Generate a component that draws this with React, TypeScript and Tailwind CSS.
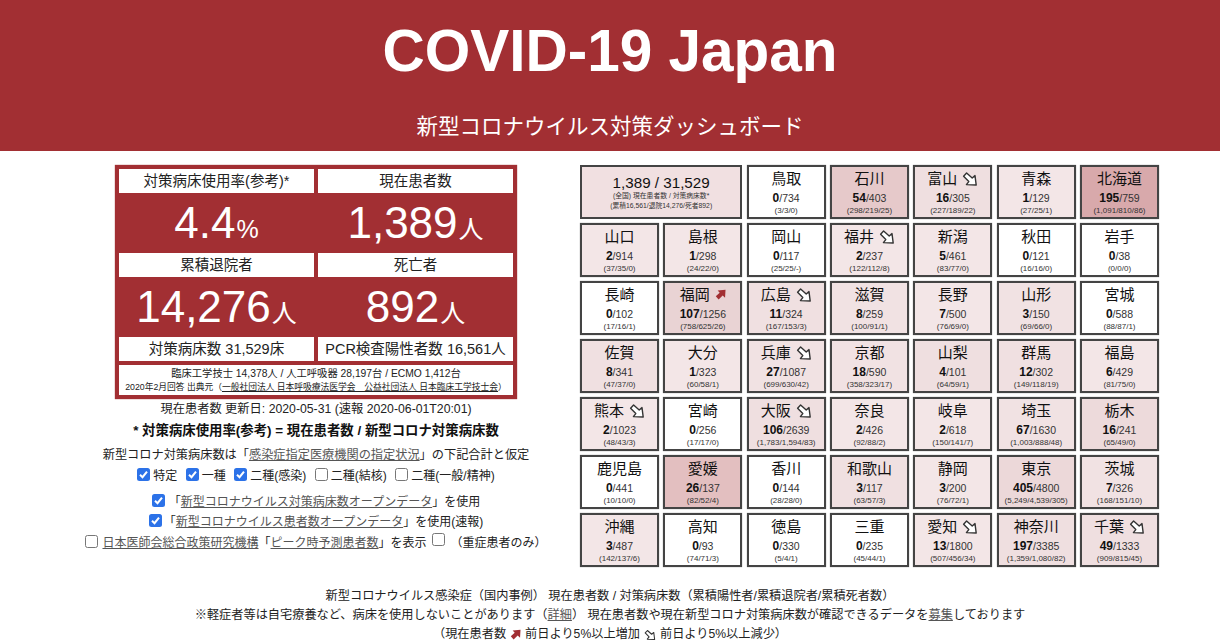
import { ReactNode } from "react"

const sans = "font-['Liberation_Sans','Noto_Sans_CJK_JP',sans-serif]"

type Pref = { name: string; now: number; beds: string; sub: string; bg: string; icon?: "up" | "down" }

// outlined arrow, down and to the right
const DownIcon = ({ size = 16 }: { size?: number }) => (
  <svg width={size} height={size} viewBox="0 0 16 16" className="inline-block" fill="#fff" stroke="#333" strokeWidth="1.4" strokeLinejoin="round">
    <path d="M4.6 2 L10.2 7 L13 4.6 L14.2 14 L4.4 13.6 L6.8 10.6 L1.6 5.2 Z" />
  </svg>
)

// filled arrow, up and to the right
const UpIcon = ({ size = 11 }: { size?: number }) => (
  <svg width={size} height={size} viewBox="0 0 14 14" className="inline-block">
    <path d="M1 9.2 L6 4.8 L3.4 2 L13.4 1 L12.8 11 L9.8 8.4 L4.6 13.4 Z" fill="#a22f33" />
  </svg>
)

const rows: Pref[][] = [
  [
    { name: "鳥取", now: 0, beds: "734", sub: "(3/3/0)", bg: "bg-white" },
    { name: "石川", now: 54, beds: "403", sub: "(298/219/25)", bg: "bg-[#e6c9ca]" },
    { name: "富山", now: 16, beds: "305", sub: "(227/189/22)", bg: "bg-[#efdfe0]", icon: "down" },
    { name: "青森", now: 1, beds: "129", sub: "(27/25/1)", bg: "bg-[#f3e6e7]" },
    { name: "北海道", now: 195, beds: "759", sub: "(1,091/810/86)", bg: "bg-[#d8a9ab]" },
  ],
  [
    { name: "山口", now: 2, beds: "914", sub: "(37/35/0)", bg: "bg-[#f3e6e7]" },
    { name: "島根", now: 1, beds: "298", sub: "(24/22/0)", bg: "bg-[#f3e6e7]" },
    { name: "岡山", now: 0, beds: "117", sub: "(25/25/-)", bg: "bg-white" },
    { name: "福井", now: 2, beds: "237", sub: "(122/112/8)", bg: "bg-[#f3e6e7]", icon: "down" },
    { name: "新潟", now: 5, beds: "461", sub: "(83/77/0)", bg: "bg-[#f3e6e7]" },
    { name: "秋田", now: 0, beds: "121", sub: "(16/16/0)", bg: "bg-white" },
    { name: "岩手", now: 0, beds: "38", sub: "(0/0/0)", bg: "bg-white" },
  ],
  [
    { name: "長崎", now: 0, beds: "102", sub: "(17/16/1)", bg: "bg-white" },
    { name: "福岡", now: 107, beds: "1256", sub: "(758/625/26)", bg: "bg-[#e9d3d4]", icon: "up" },
    { name: "広島", now: 11, beds: "324", sub: "(167/153/3)", bg: "bg-[#f0e0e1]", icon: "down" },
    { name: "滋賀", now: 8, beds: "259", sub: "(100/91/1)", bg: "bg-[#f1e2e3]" },
    { name: "長野", now: 7, beds: "500", sub: "(76/69/0)", bg: "bg-[#f3e6e7]" },
    { name: "山形", now: 3, beds: "150", sub: "(69/66/0)", bg: "bg-[#f1e2e3]" },
    { name: "宮城", now: 0, beds: "588", sub: "(88/87/1)", bg: "bg-white" },
  ],
  [
    { name: "佐賀", now: 8, beds: "341", sub: "(47/37/0)", bg: "bg-[#f0e0e1]" },
    { name: "大分", now: 1, beds: "323", sub: "(60/58/1)", bg: "bg-[#f3e6e7]" },
    { name: "兵庫", now: 27, beds: "1087", sub: "(699/630/42)", bg: "bg-[#f1e2e3]", icon: "down" },
    { name: "京都", now: 18, beds: "590", sub: "(358/323/17)", bg: "bg-[#f1e2e3]" },
    { name: "山梨", now: 4, beds: "101", sub: "(64/59/1)", bg: "bg-[#efdfe0]" },
    { name: "群馬", now: 12, beds: "302", sub: "(149/118/19)", bg: "bg-[#f0e0e1]" },
    { name: "福島", now: 6, beds: "429", sub: "(81/75/0)", bg: "bg-[#f3e6e7]" },
  ],
  [
    { name: "熊本", now: 2, beds: "1023", sub: "(48/43/3)", bg: "bg-[#f3e6e7]", icon: "down" },
    { name: "宮崎", now: 0, beds: "256", sub: "(17/17/0)", bg: "bg-white" },
    { name: "大阪", now: 106, beds: "2639", sub: "(1,783/1,594/83)", bg: "bg-[#efdfe0]", icon: "down" },
    { name: "奈良", now: 2, beds: "426", sub: "(92/88/2)", bg: "bg-[#f3e6e7]" },
    { name: "岐阜", now: 2, beds: "618", sub: "(150/141/7)", bg: "bg-[#f3e6e7]" },
    { name: "埼玉", now: 67, beds: "1630", sub: "(1,003/888/48)", bg: "bg-[#f1e2e3]" },
    { name: "栃木", now: 16, beds: "241", sub: "(65/49/0)", bg: "bg-[#eddadb]" },
  ],
  [
    { name: "鹿児島", now: 0, beds: "441", sub: "(10/10/0)", bg: "bg-white" },
    { name: "愛媛", now: 26, beds: "137", sub: "(82/52/4)", bg: "bg-[#e3bfc0]" },
    { name: "香川", now: 0, beds: "144", sub: "(28/28/0)", bg: "bg-white" },
    { name: "和歌山", now: 3, beds: "117", sub: "(63/57/3)", bg: "bg-[#f0e0e1]" },
    { name: "静岡", now: 3, beds: "200", sub: "(76/72/1)", bg: "bg-[#f3e6e7]" },
    { name: "東京", now: 405, beds: "4800", sub: "(5,249/4,539/305)", bg: "bg-[#ecd8d9]" },
    { name: "茨城", now: 7, beds: "326", sub: "(168/151/10)", bg: "bg-[#f1e2e3]" },
  ],
  [
    { name: "沖縄", now: 3, beds: "487", sub: "(142/137/6)", bg: "bg-[#f3e6e7]" },
    { name: "高知", now: 0, beds: "93", sub: "(74/71/3)", bg: "bg-white" },
    { name: "徳島", now: 0, beds: "330", sub: "(5/4/1)", bg: "bg-white" },
    { name: "三重", now: 0, beds: "235", sub: "(45/44/1)", bg: "bg-white" },
    { name: "愛知", now: 13, beds: "1800", sub: "(507/456/34)", bg: "bg-[#f3e6e7]", icon: "down" },
    { name: "神奈川", now: 197, beds: "3385", sub: "(1,359/1,080/82)", bg: "bg-[#efdfe0]" },
    { name: "千葉", now: 49, beds: "1333", sub: "(909/815/45)", bg: "bg-[#efdfe0]", icon: "down" },
  ],
]

const Cell = ({ p }: { p: Pref }) => (
  <div className={`${p.bg} h-[54px] border-[2px] border-[#444] flex flex-col items-center text-[#111] shadow-[0_0_1px_#888]`}>
    <div className="h-[21px] mt-[1px] flex items-center justify-center gap-[5px] text-[15px] leading-none">
      <span>{p.name}</span>
      {p.icon === "up" && <UpIcon />}
      {p.icon === "down" && <DownIcon />}
    </div>
    <div className="text-[10.5px] leading-[13px] mt-[3px]">
      <b className="text-[12px]">{p.now}</b>
      <span className="text-[#333]">/{p.beds}</span>
    </div>
    <div className="text-[8px] leading-[10px] text-[#333] mt-[1px] whitespace-nowrap">{p.sub}</div>
  </div>
)

const Label = ({ children }: { children: ReactNode }) => (
  <div className="bg-white h-[24px] flex items-center justify-center text-[14.5px] text-[#222] leading-none whitespace-nowrap">{children}</div>
)

const Stat = ({ value, unit }: { value: string; unit: string }) => (
  <div className="h-[60px] flex items-center justify-center text-white text-[44px] leading-none">
    {value}
    <span className="text-[25px] mt-[12px] ml-[1px]">{unit}</span>
  </div>
)

const Check = ({ on }: { on?: boolean }) =>
  on ? (
    <span className="inline-flex shrink-0 -translate-y-[2px] w-[13px] h-[13px] rounded-[2.5px] bg-[#2c72e8] items-center justify-center">
      <svg width="11" height="11" viewBox="0 0 11 11" fill="none" stroke="#fff" strokeWidth="2"><path d="M2 5.8 L4.5 8.2 L9 2.6" /></svg>
    </span>
  ) : (
    <span className="inline-block shrink-0 -translate-y-[2px] w-[13px] h-[13px] rounded-[2.5px] bg-white border border-[#777]" />
  )

const Link = ({ children }: { children: ReactNode }) => <span className="underline text-[#555]">{children}</span>

export default function App() {
  return (
    <div className={`${sans} w-[1220px] h-[640px] overflow-hidden bg-white text-[#222]`}>
      <header className="bg-[#a22f33] h-[151px] text-white flex flex-col items-center">
        <h1 className="text-[58.5px] font-bold leading-none mt-[22px]">COVID-19 Japan</h1>
        <p className="text-[21.5px] leading-none mt-[36px]">新型コロナウイルス対策ダッシュボード</p>
      </header>

      <div className="flex mt-[14px] pl-[87px]">
        {/* left side */}
        <div className="w-[458px] flex flex-col items-center">
          <div className="w-[402px] bg-[#a22f33] p-[4px] shadow-[0_0_1px_#a22f33]">
            <div className="grid grid-cols-2 gap-x-[4px]">
              <Label>対策病床使用率(参考)*</Label>
              <Label>現在患者数</Label>
              <Stat value="4.4" unit="%" />
              <Stat value="1,389" unit="人" />
              <Label>累積退院者</Label>
              <Label>死亡者</Label>
              <Stat value="14,276" unit="人" />
              <Stat value="892" unit="人" />
              <Label>対策病床数 31,529床</Label>
              <Label>PCR検査陽性者数 16,561人</Label>
            </div>
            <div className="bg-white mt-[4px] h-[30px] text-center text-[#222] flex flex-col justify-center">
              <div className="text-[10.3px] leading-[14px]">臨床工学技士 14,378人 / 人工呼吸器 28,197台 / ECMO 1,412台</div>
              <div className="text-[8.75px] leading-[13px] whitespace-nowrap">
                2020年2月回答 出典元（<span className="underline">一般社団法人 日本呼吸療法医学会　公益社団法人 日本臨床工学技士会</span>）
              </div>
            </div>
          </div>

          <p className="text-[12.25px] leading-[14px] mt-[3px]">現在患者数 更新日: 2020-05-31 (速報 2020-06-01T20:01)</p>
          <p className="text-[13.4px] font-bold leading-[14px] mt-[8px] text-[#111] whitespace-nowrap">* 対策病床使用率(参考) = 現在患者数 / 新型コロナ対策病床数</p>
          <p className="text-[12.2px] leading-[14px] mt-[10px]">新型コロナ対策病床数は「<Link>感染症指定医療機関の指定状況</Link>」の下記合計と仮定</p>
          <div className="flex items-center gap-[8.5px] text-[12px] leading-[14px] mt-[7px]">
            <span className="flex items-center gap-[3px]"><Check on />特定</span>
            <span className="flex items-center gap-[3px]"><Check on />一種</span>
            <span className="flex items-center gap-[3px]"><Check on />二種(感染)</span>
            <span className="flex items-center gap-[3px]"><Check />二種(結核)</span>
            <span className="flex items-center gap-[3px]"><Check />二種(一般/精神)</span>
          </div>
          <div className="flex items-center gap-[2px] text-[12px] leading-[14px] mt-[12px]"><Check on /><span className="ml-[2px]">「<Link>新型コロナウイルス対策病床数オープンデータ</Link>」を使用</span></div>
          <div className="flex items-center gap-[2px] text-[12px] leading-[14px] mt-[6px]"><Check on /><span>「<Link>新型コロナウイルス患者数オープンデータ</Link>」を使用(速報)</span></div>
          <div className="flex items-center gap-[2px] text-[12px] leading-[14px] mt-[6px] whitespace-nowrap">
            <Check /><span className="ml-[2px]"><Link>日本医師会総合政策研究機構</Link>「<Link>ピーク時予測患者数</Link>」を表示</span>
            <span className="ml-[3px]"><Check /></span><span className="ml-[4px]">（重症患者のみ）</span>
          </div>
        </div>

        {/* prefecture grid */}
        <div className="ml-[35px] w-[579px] flex flex-col gap-y-[4px]">
          {rows.map((row, i) => (
            <div key={i} className="grid grid-cols-7 gap-x-[4.33px]">
              {i === 0 && (
                <div className="col-span-2 h-[54px] bg-[#f1e0e1] border-[2px] border-[#444] flex flex-col items-center text-[#111]">
                  <div className="text-[15.2px] leading-[17px] mt-[7px]">1,389 / 31,529</div>
                  <div className="text-[6.8px] leading-[10px] text-[#333]">(全国) 現在患者数 / 対策病床数*</div>
                  <div className="text-[6.8px] leading-[10px] text-[#333]">(累積16,561/退院14,276/死者892)</div>
                </div>
              )}
              {row.map((p) => <Cell key={p.name} p={p} />)}
            </div>
          ))}
        </div>
      </div>

      <footer className="text-center text-[12.2px] leading-[19px] mt-[20px] text-[#222]">
        <p>新型コロナウイルス感染症（国内事例） 現在患者数 / 対策病床数（累積陽性者/累積退院者/累積死者数）</p>
        <p>※軽症者等は自宅療養など、病床を使用しないことがあります（<Link>詳細</Link>） 現在患者数や現在新型コロナ対策病床数が確認できるデータを<Link>募集</Link>しております</p>
        <p className="flex items-center justify-center gap-[4px]">（現在患者数 <UpIcon size={11} /> 前日より5%以上増加 <DownIcon size={12} /> 前日より5%以上減少）</p>
      </footer>
    </div>
  )
}
